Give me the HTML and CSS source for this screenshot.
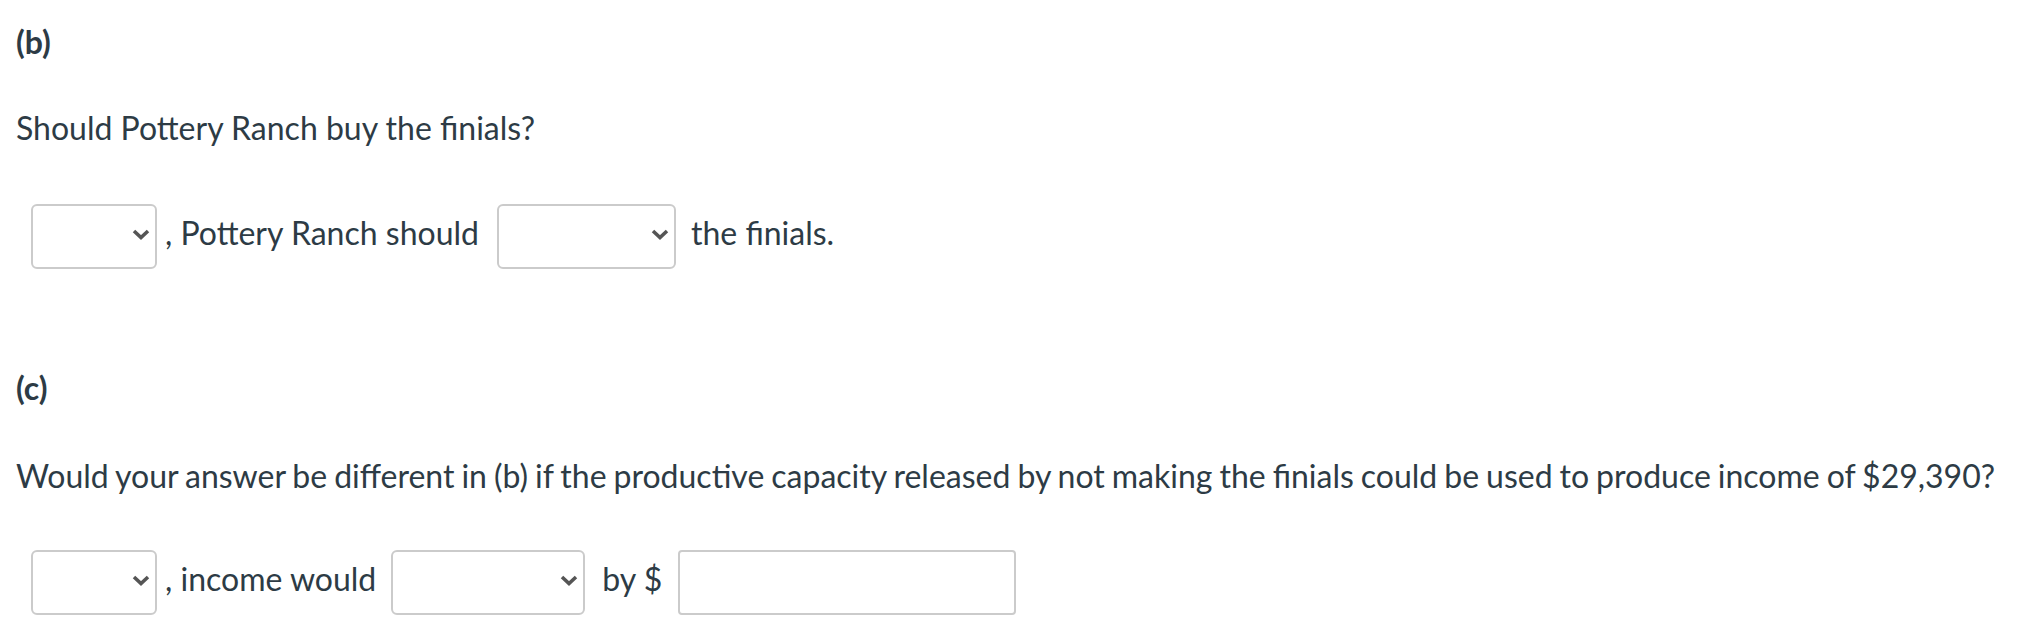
FILE: index.html
```html
<!DOCTYPE html>
<html>
<head>
<meta charset="utf-8">
<link rel="stylesheet" href="styles.css">
</head>
<body>
<div class="page">
  <p class="label label-b"><strong>(b)</strong></p>
  <p class="question q-b">Should Pott&zwnj;ery Ranch buy the finials?</p>
  <div class="answer-row row-b">
    <div class="select sel-short">
      <svg class="chev" width="18" height="11" viewBox="0 0 18 11"><polyline points="2,2 9,8.5 16,2" fill="none" stroke="#555" stroke-width="3.6"/></svg>
    </div>
    <span class="txt comma">, Pott&zwnj;ery Ranch should</span>
    <div class="select sel-mid">
      <svg class="chev" width="18" height="11" viewBox="0 0 18 11"><polyline points="2,2 9,8.5 16,2" fill="none" stroke="#555" stroke-width="3.6"/></svg>
    </div>
    <span class="txt after">the finials.</span>
  </div>

  <p class="label label-c"><strong>(c)</strong></p>
  <p class="question q-c">Would your answer be different in (b) if the productive capacity released by not making the finials could be used to produce income of $29,390?</p>
  <div class="answer-row row-c">
    <div class="select sel-short">
      <svg class="chev" width="18" height="11" viewBox="0 0 18 11"><polyline points="2,2 9,8.5 16,2" fill="none" stroke="#555" stroke-width="3.6"/></svg>
    </div>
    <span class="txt comma">, income would</span>
    <div class="select sel-wide">
      <svg class="chev" width="18" height="11" viewBox="0 0 18 11"><polyline points="2,2 9,8.5 16,2" fill="none" stroke="#555" stroke-width="3.6"/></svg>
    </div>
    <span class="txt after">by $</span>
    <div class="text-input"></div>
  </div>
</div>
</body>
</html>
```

FILE: styles.css
```css
html, body {
  margin: 0;
  padding: 0;
  background: #ffffff;
}

.page {
  font-family: Lato, "Liberation Sans", sans-serif;
  font-size: 32px;
  line-height: 48px;
  color: #2d3b45;
  padding: 18px 0 0 16px;
}

p {
  margin: 0;
}

.label strong {
  font-weight: 700;
}

.q-b {
  margin-top: 38px;
}

.q-c {
  word-spacing: -1.2px;
}

.row-b {
  margin-top: 52px;
}

.label-c {
  margin-top: 95px;
}

.q-c {
  margin-top: 40px;
}

.row-c {
  margin-top: 50px;
}

.answer-row {
  display: flex;
  align-items: center;
  margin-left: 15px;
  height: 65px;
}

.select {
  box-sizing: border-box;
  height: 65px;
  border: 2px solid #cbcbcb;
  border-radius: 6px;
  background: #fff;
  display: flex;
  align-items: center;
  justify-content: flex-end;
  padding-right: 5px;
  padding-bottom: 4px;
}

.sel-short { width: 126px; }
.sel-mid { width: 179px; }
.sel-wide { width: 194px; }

.chev {
  display: block;
}

.txt {
  white-space: nowrap;
  margin-bottom: 8px;
}

.txt.comma {
  margin-left: 8px;
}

.txt + .select,
.txt + .text-input {
  margin-left: 18px;
}

.row-c .txt + .select {
  margin-left: 15px;
}

.row-c .txt + .text-input {
  margin-left: 16px;
}

.txt.after {
  margin-left: 17px;
}

.row-b .txt.after {
  margin-left: 15px;
}

.text-input {
  box-sizing: border-box;
  width: 338px;
  height: 65px;
  border: 2px solid #cbcbcb;
  border-radius: 4px;
  background: #fff;
}
```
